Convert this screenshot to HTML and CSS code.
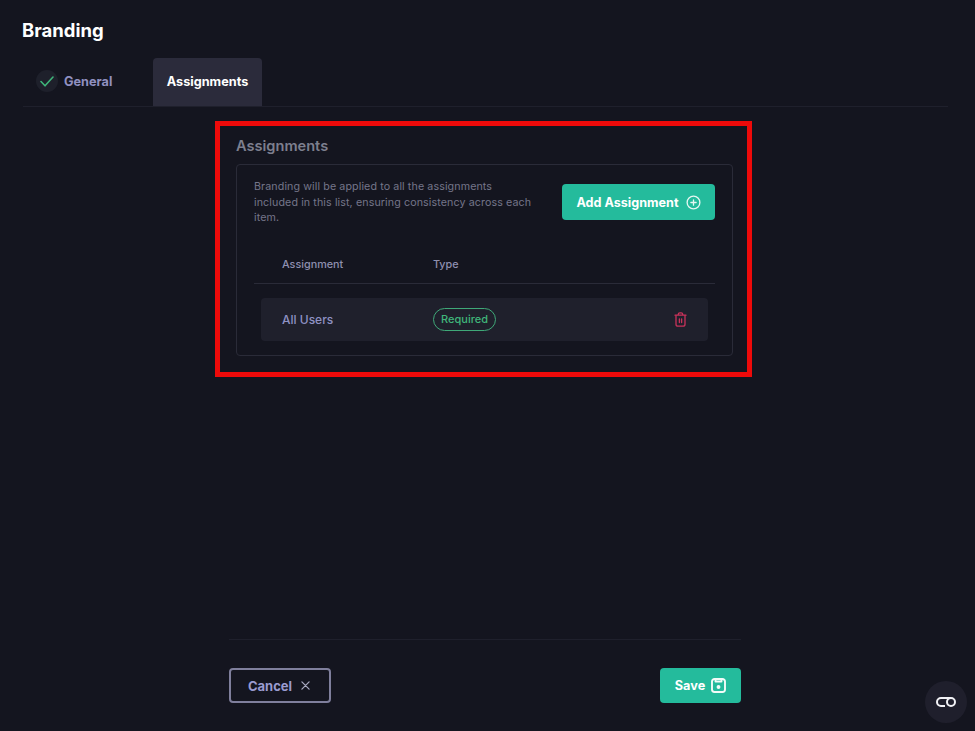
FILE: index.html
```html
<!DOCTYPE html>
<html lang="en">
<head>
    <meta charset="UTF-8">
    <meta name="viewport" content="width=device-width, initial-scale=1.0">
    <title>Branding</title>
    <link rel="stylesheet" href="styles.css">
</head>
<body>

<div class="page">
    <h1 class="page-title">Branding</h1>

    <!-- Tabs -->
    <div class="tabs">
        <div class="tab tab-done">
            <span class="tab-check">
                <svg width="14" height="11" viewBox="0 0 14 11" fill="none" stroke="#3fb57a" stroke-width="1.6" stroke-linecap="round" stroke-linejoin="round"><path d="M1 5.5l4 4.3 8-8.8"/></svg>
            </span>
            General
        </div>
        <div class="tab tab-active">Assignments</div>
    </div>

    <div class="content">
        <section class="highlight">
            <h2 class="section-title">Assignments</h2>
            <div class="card">
                <div class="card-top">
                    <p class="card-text">Branding will be applied to all the assignments included in this list, ensuring consistency across each item.</p>
                    <button class="btn btn-add">
                        Add Assignment
                        <svg width="15" height="15" viewBox="0 0 16 16" fill="none" stroke="#e6f7f2" stroke-width="1.4" stroke-linecap="round"><circle cx="8" cy="8" r="6.8"/><path d="M8 5.2v5.6M5.2 8h5.6"/></svg>
                    </button>
                </div>

                <div class="table-head">
                    <span class="col-name">Assignment</span>
                    <span>Type</span>
                </div>

                <div class="table-row">
                    <span class="col-name row-name">All Users</span>
                    <span class="badge">Required</span>
                    <svg class="row-delete" width="13" height="15" viewBox="0 0 13 15" fill="none" stroke="#c8325a" stroke-width="1.3" stroke-linecap="round" stroke-linejoin="round"><path d="M1 3.2h11M4.3 3.2V2.2C4.3 1.3 5 .8 5.8.8h1.4c.8 0 1.5.5 1.5 1.4v1M2 3.2v9c0 1.2.8 2 2 2h5c1.2 0 2-.8 2-2v-9M5.4 7v3.6M7.6 7v3.6"/></svg>
                </div>
            </div>
        </section>
    </div>

    <!-- Footer buttons -->
    <div class="footer">
        <button class="btn btn-cancel">
            Cancel
            <svg width="9" height="9" viewBox="0 0 10 10" fill="none" stroke="#a9a9c0" stroke-width="1.4" stroke-linecap="round"><path d="M1 1l8 8M9 1l-8 8"/></svg>
        </button>
        <button class="btn btn-save">
            Save
            <svg width="15" height="15" viewBox="0 0 15 15" fill="none" stroke="#f2fbf8" stroke-width="1.9" stroke-linejoin="round"><path d="M3.5 1h8A2.5 2.5 0 0 1 14 3.500v8a2.500 2.500 0 0 1-2.500 2.500h-8A2.500 2.500 0 0 1 1 11.500v-8A2.500 2.500 0 0 1 3.500 1z"/><path d="M4.500 1v2.500h6V1"/><circle cx="7.500" cy="9" r="1" fill="#f2fbf8"/></svg>
        </button>
    </div>
</div>

<div class="float-btn">
    <svg width="22" height="12" viewBox="0 0 22 12" fill="none" stroke="#f2f2f6" stroke-width="2"><path d="M16 2H6a4 4 0 0 0 0 8h4"/><circle cx="16" cy="6" r="4"/></svg>
</div>

</body>
</html>
```

FILE: styles.css
```css
/* General Styling */
html, body {
    margin: 0;
    padding: 0;
}
body {
    font-family: 'Inter', 'Liberation Sans', sans-serif;
    background-color: #14151f;
    color: #fff;
}
.page {
    display: flex;
    flex-direction: column;
    height: 731px;
    box-sizing: border-box;
    padding: 19px 27px 28px 22px;
    overflow: hidden;
}
.page-title {
    margin: 0;
    font-size: 18.5px;
    line-height: 22px;
    font-weight: 700;
}

/* Tabs */
.tabs {
    display: flex;
    height: 48px;
    margin: 17px 0 0 1px;
    border-bottom: 1px solid #1f202c;
}
.tab {
    display: flex;
    align-items: center;
    box-sizing: border-box;
    padding-bottom: 2px;
    font-size: 12.7px;
    font-weight: 700;
}
.tab-done {
    width: 130px;
    padding-left: 13px;
    gap: 6px;
    color: #9090c0;
}
.tab-check {
    display: flex;
    align-items: center;
    justify-content: center;
    width: 22px;
    height: 22px;
    border-radius: 50%;
    background-color: #1e202b;
}
.tab-active {
    justify-content: center;
    width: 109px;
    background-color: #2b2b3b;
    border-radius: 4px 4px 0 0;
}

/* Assignments section */
.content {
    flex: 1;
    padding: 14px 196px 0 193px;
}
.highlight {
    border: 5px solid #ee0a0a;
    height: 256px;
    box-sizing: border-box;
    padding: 10px 14px 0 16px;
}
.section-title {
    margin: 0 0 8px;
    font-size: 14.6px;
    line-height: 20px;
    font-weight: 600;
    color: #7d7f8e;
}
.card {
    box-sizing: border-box;
    height: 192px;
    border: 1px solid #2a2b38;
    border-radius: 4px;
    padding: 14px 17px 0 17px;
}
.card-top {
    display: flex;
    justify-content: space-between;
    align-items: center;
}
.card-text {
    margin: 0;
    width: 285px;
    font-size: 10.7px;
    line-height: 15.5px;
    letter-spacing: 0.1px;
    color: #74768a;
}
.btn {
    display: flex;
    align-items: center;
    justify-content: center;
    box-sizing: border-box;
    border: none;
    border-radius: 4px;
    font-family: inherit;
    font-weight: 700;
    cursor: pointer;
}
.btn-add {
    width: 153px;
    height: 36px;
    gap: 7px;
    font-size: 12.6px;
    color: #fff;
    background-color: #24bb9c;
}

/* Table */
.table-head {
    display: flex;
    align-items: center;
    height: 37px;
    margin-top: 20px;
    border-bottom: 1px solid #2a2b38;
    font-size: 10.8px;
    font-weight: 500;
    color: #8f90b0;
}
.col-name {
    width: 151px;
    margin-left: 28px;
}
.table-row {
    display: flex;
    align-items: center;
    height: 43px;
    margin: 14px 7px 0 7px;
    background-color: #1f202c;
    border-radius: 4px;
}
.table-row .col-name {
    margin-left: 21px;
}
.row-name {
    font-size: 12px;
    font-weight: 500;
    color: #8f92c4;
}
.badge {
    box-sizing: border-box;
    width: 63px;
    height: 23px;
    line-height: 20px;
    text-align: center;
    border: 1.5px solid #3fa878;
    border-radius: 12px;
    font-size: 11px;
    font-weight: 500;
    color: #3fb57a;
}
.row-delete {
    margin-left: auto;
    margin-right: 21px;
}

/* Footer */
.footer {
    display: flex;
    justify-content: space-between;
    align-items: flex-end;
    height: 63px;
    margin: 0 207px 0 207px;
    border-top: 1px solid #1f202c;
}
.btn-cancel {
    width: 102px;
    height: 35px;
    gap: 9px;
    padding-right: 8px;
    font-size: 13px;
    color: #9a9bd0;
    background: transparent;
    border: 2px solid #7f7f9c;
}
.btn-save {
    width: 81px;
    height: 35px;
    gap: 6px;
    font-size: 12.7px;
    color: #fff;
    background-color: #24bb9c;
}

/* Floating button */
.float-btn {
    position: absolute;
    left: 925px;
    top: 681px;
    display: flex;
    align-items: center;
    justify-content: center;
    width: 42px;
    height: 42px;
    border-radius: 50%;
    background-color: #1f1f2c;
}
```
